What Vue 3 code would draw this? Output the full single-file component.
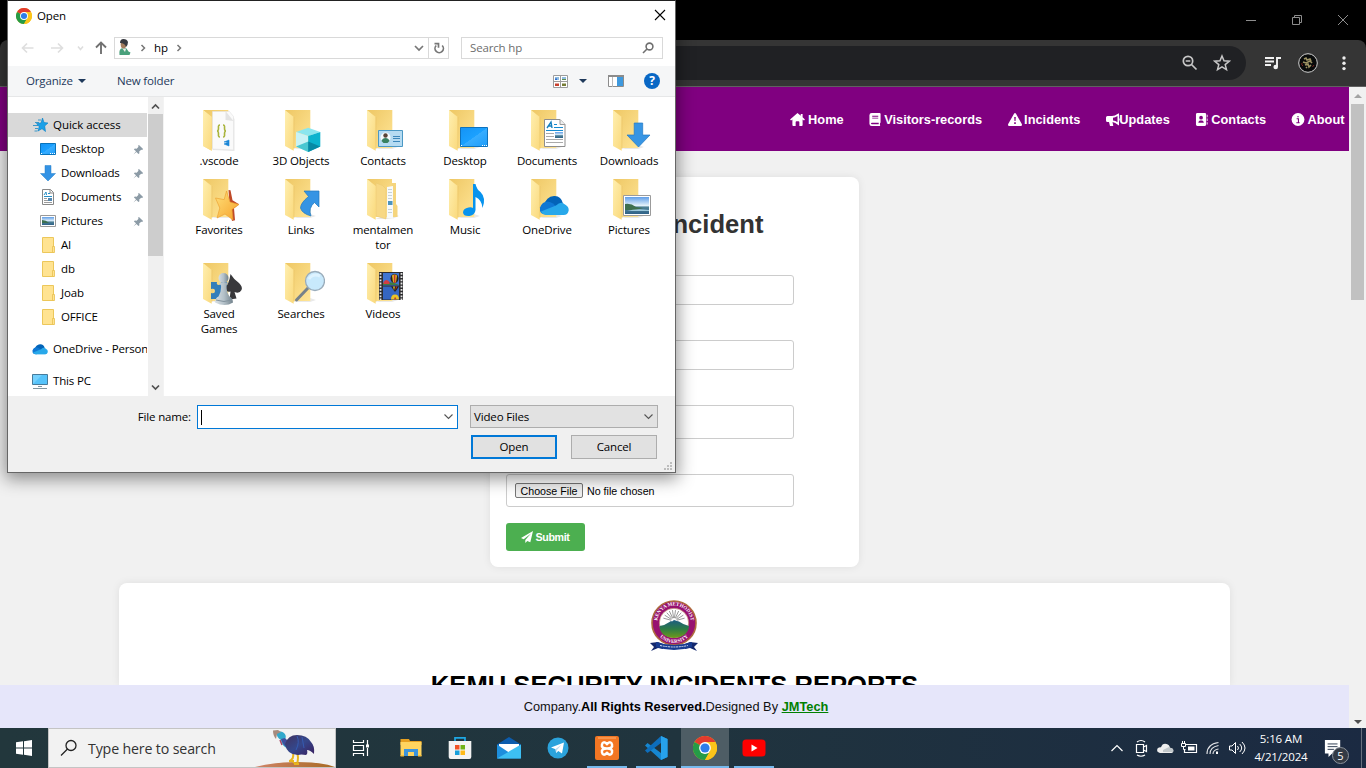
<script setup>
const places = [
  { label: 'Desktop', icon: 's-desktop', pin: true },
  { label: 'Downloads', icon: 's-down', pin: true },
  { label: 'Documents', icon: 's-doc', pin: true },
  { label: 'Pictures', icon: 's-pic', pin: true },
  { label: 'AI', icon: 's-folder' },
  { label: 'db', icon: 's-folder' },
  { label: 'Joab', icon: 's-folder' },
  { label: 'OFFICE', icon: 's-folder' },
]
const files = [
  ['.vscode', 'f-vscode'], ['3D Objects', 'f-3d'], ['Contacts', 'f-contacts'],
  ['Desktop', 'f-desktop'], ['Documents', 'f-docs'], ['Downloads', 'f-down'],
  ['Favorites', 'f-fav'], ['Links', 'f-links'], ['mentalmen\ntor', 'f-mental'],
  ['Music', 'f-music'], ['OneDrive', 'f-onedrive'], ['Pictures', 'f-pics'],
  ['Saved\nGames', 'f-games'], ['Searches', 'f-search'], ['Videos', 'f-videos'],
]
const nav = [
  { label: 'Home', icon: 'n-home', cls: 'w18' },
  { label: 'Visitors-records', icon: 'n-book', cls: 'w15' },
  { label: 'Incidents', icon: 'n-warn', cls: 'w17' },
  { label: 'Updates', icon: 'n-horn', cls: 'w14' },
  { label: 'Contacts', icon: 'n-card', cls: 'w16' },
  { label: 'About', icon: 'n-info', cls: 'w16' },
]
const apps = [
  { icon: 't-view' }, { icon: 't-explorer' }, { icon: 't-store' }, { icon: 't-mail' }, { icon: 't-telegram' },
  { icon: 't-xampp', open: true }, { icon: 't-code', open: true }, { icon: 'chrome', open: true, active: true }, { icon: 't-youtube', open: true },
]
const tray = ['y-chevron', 'y-meet', 'y-cloud', 'y-battery', 'y-wifi', 'y-volume']
const rays = [-75, -58, -41, -25, -8, 8, 25, 41, 58, 75]
</script>

<template>
  <div class="screen">
    <svg class="defs" width="0" height="0">
      <defs>
        <linearGradient id="gBack" x1="0" y1="0" x2="1" y2="1"><stop offset="0" stop-color="#eec764" /><stop offset="1" stop-color="#ffe596" /></linearGradient>
        <linearGradient id="gFront" x1="0" y1="0" x2="1" y2="1"><stop offset="0" stop-color="#ffefb0" /><stop offset="1" stop-color="#fad97c" /></linearGradient>
        <linearGradient id="gBlue" x1="0" y1="0" x2="1" y2="1"><stop offset="0" stop-color="#1493f5" /><stop offset=".5" stop-color="#1ba1ff" /><stop offset=".51" stop-color="#38adff" /><stop offset="1" stop-color="#1d9dfa" /></linearGradient>
        <linearGradient id="gPic" x1="0" y1="0" x2="0" y2="1"><stop offset="0" stop-color="#5f9ee8" /><stop offset=".5" stop-color="#e3f1fa" /><stop offset=".6" stop-color="#4f8196" /><stop offset="1" stop-color="#2f6288" /></linearGradient>
        <linearGradient id="gStar" x1="0" y1="0" x2="1" y2="1"><stop offset="0" stop-color="#ffe07a" /><stop offset="1" stop-color="#f6a22a" /></linearGradient>
        <linearGradient id="gHill" x1="0" y1="0" x2="0" y2="1"><stop offset="0" stop-color="#1c5c83" /><stop offset=".5" stop-color="#2c7b45" /><stop offset="1" stop-color="#6f9a19" /></linearGradient>
        <linearGradient id="gPawn" x1="0" y1="0" x2="1" y2="0"><stop offset="0" stop-color="#d7dfe5" /><stop offset=".5" stop-color="#b3c0c8" /><stop offset="1" stop-color="#71818b" /></linearGradient>
        <linearGradient id="gBird" x1="0" y1="0" x2="1" y2="1"><stop offset="0" stop-color="#40315f" /><stop offset=".5" stop-color="#34478b" /><stop offset="1" stop-color="#3a205f" /></linearGradient>
        <linearGradient id="gSand" x1="0" y1="0" x2="1" y2="0"><stop offset="0" stop-color="#cf8468" /><stop offset="1" stop-color="#a86a22" /></linearGradient>
      </defs>
      <symbol id="chrome" viewBox="0 0 24 24">
        <circle cx="12" cy="12" r="12" fill="#fbc116" />
        <path d="M12 12 1.6 6A12 12 0 0 1 22.4 6Z" fill="#e33b2e" />
        <path d="M12 12 1.6 6A12 12 0 0 0 12 24l5-9Z" fill="#259b47" />
        <path d="M12 6h10.4A12 12 0 0 1 12 24l5.2-9Z" fill="#fcc419" />
        <circle cx="12" cy="12" r="5.9" fill="#fff" /><circle cx="12" cy="12" r="4.6" fill="#2f7de9" />
      </symbol>
      <symbol id="folder" viewBox="0 0 48 48">
        <path d="M16 44h17l6-2-6-2Z" fill="#e9e9e9" />
        <path d="M8 5H33.300V43H16Z" fill="url(#gBack)" /><path d="M8 5 16.700 12V45.700L8 41Z" fill="url(#gFront)" />
        <path d="M16.900 12v32" stroke="#e6c163" stroke-width=".5" />
      </symbol>
      <symbol id="photo" viewBox="0 0 28 21">
        <path d="M.5.5h27v20H.5Z" fill="#fff" stroke="#9b9b9b" /><path d="M2 2h24v17H2Z" fill="url(#gPic)" />
        <path d="M2 9q6-1 11 3l7 1-7 2H2Z" fill="#3d6f4e" /><path d="M4 16q9-3 22-1v1Z" fill="#9cc8dc" />
      </symbol>
      <symbol id="cloud" viewBox="0 0 30 20">
        <path d="M5 10Q7 1 15 .5 22 0 24 8l-9 5Z" fill="#0364b8" /><path d="M1 12q2-6 8-6 5 1 8 5l-8 8H7Q0 19 1 12Z" fill="#0f78d4" />
        <path d="M17 10q5-5 9-1 4 2 3.700 6-1 4.500-5 4.500H7Q3 19 2 16Z" fill="#28a8ea" />
      </symbol>
      <symbol id="f-vscode" viewBox="0 0 48 48">
        <use href="#folder" /><path d="M18 9h18l3.500 5v32l-22-1Z" fill="#e8e8e8" /><path d="M17.500 6.500h17l4 5V45l-21-1Z" fill="#fafafa" stroke="#e2e2e2" stroke-width=".6" />
        <path d="m30.500 6 8 10-8-1Z" fill="#e3e3e3" />
        <path d="M25 20q-2 0-1.500 3 0 3-1.500 3 1.500 0 1.500 3-.5 3 1.500 3M28 20q2 0 1.500 3 0 3 1.500 3-1.500 0-1.500 3 .5 3-1.500 3" fill="none" stroke="#a9b43c" stroke-width="1.600" />
        <path d="m29 37 5-2v6l-5-2 4-2Z" fill="#1b86d6" stroke="#1b86d6" stroke-width=".6" /><path d="M8 5 16.700 12V45.700L8 41Z" fill="url(#gFront)" />
      </symbol>
      <symbol id="f-3d" viewBox="0 0 48 48">
        <use href="#folder" /><path d="m31.200 22.700 12.100 4.300L31.200 31 19 27Z" fill="#8be6ee" /><path d="m19 27 12.200 4v16L19 41.500Z" fill="#c8f2f5" />
        <path d="M43.300 27 31.200 31v16l12.100-5.500Z" fill="#0cb3ce" /><path d="m19 41.500 12.200-5v10.500Z" fill="#49c7d1" /><path d="m31.200 36.500 12.100 5L31.200 47Z" fill="#078aa5" />
      </symbol>
      <symbol id="f-contacts" viewBox="0 0 48 48">
        <use href="#folder" /><path d="M19.500 25.500h24v16h-24Z" fill="#b5dbf2" stroke="#4b98c4" /><circle cx="26.500" cy="32.500" r="5" fill="#f5fafc" />
        <circle cx="26.500" cy="30.500" r="2.200" fill="#594437" /><path d="M22.500 36q1-3 4-3t4 3l-2 2h-4Z" fill="#378161" /><path d="M34 31.500h7M34 33.500h7M34 36.500h7" stroke="#3c87bb" />
      </symbol>
      <symbol id="f-desktop" viewBox="0 0 48 48"><use href="#folder" /><path d="M19.500 22.500h27v19h-27Z" fill="url(#gBlue)" stroke="#0e72bd" /><path d="M20 40.500h1M41 40.500h1M43 40.500h1M45 40.500h1" stroke="#fff" /></symbol>
      <symbol id="f-docs" viewBox="0 0 48 48">
        <use href="#folder" /><path d="M21.500 14.500H37l5 5v22H21.500Z" fill="#fff" stroke="#8d8d8d" /><path d="M37 14.500v5h5" fill="#eee" stroke="#9a9a9a" />
        <path d="m24 23 4-6 1 6m-4-2h4" fill="none" stroke="#1680bf" stroke-width="1.400" /><path d="M31 19.500h3M31 22.500h9M23 25.500h17" stroke="#168bd0" />
        <path d="M23 28.500h8M23 31.500h8M23 34.500h17M23 37.500h17" stroke="#aaa" /><path d="M32 27h8v6h-8Z" fill="url(#gPic)" />
      </symbol>
      <symbol id="f-down" viewBox="0 0 48 48"><use href="#folder" /><path d="M29.200 18h8.500v12H45L33.500 42 22 30h7.200Z" fill="#3795e4" stroke="#2279c3" stroke-width=".7" /></symbol>
      <symbol id="f-fav" viewBox="0 0 48 48">
        <use href="#folder" /><path d="m33.500 16 2 .3 2 10 6.500 4-5 4 1 12-3 .7-2-10Z" fill="#bf4928" />
        <path d="m31.500 17 3.500 11 9 2.500-7 5 1 10.500-8-6-8 4 2.800-10L20.500 24l8.700 1.600Z" fill="url(#gStar)" stroke="#e99a2a" stroke-width=".6" />
      </symbol>
      <symbol id="f-links" viewBox="0 0 48 48"><use href="#folder" /><path d="M27 17h15v16l-4.500-4.500Q31 34 34 42 25 39.500 23.500 34q0-5 8-11.500Z" fill="#3594e4" stroke="#2378bd" stroke-width=".7" /></symbol>
      <symbol id="f-mental" viewBox="0 0 48 48">
        <path d="M16 45h17l7-3-6-3Z" fill="#e9e9e9" />
        <path d="M8 5H33v38H16Z" fill="url(#gBack)" /><path d="M33 9h4v21l1.500 2v11H33Z" fill="#f5d57e" />
        <path d="m28 13 6-1v33l-6-1Z" fill="#f7fafb" /><path d="M29 15.500h4M29 18.500h4M29 21.500h4M29 24.500h4M29 35.500h4M29 38.500h4" stroke="#c6d2d8" /><path d="M29 27h4.500v4H29Z" fill="#4d94be" />
        <path d="M17 9q8 2 10 6v30l-10-3Z" fill="#f7d885" stroke="#e9c66d" stroke-width=".5" /><path d="M8 5 16.700 12V45.700L8 41Z" fill="url(#gFront)" />
      </symbol>
      <symbol id="f-music" viewBox="0 0 48 48"><use href="#folder" /><path d="M32 10h2.500q1 5 5 8 6 6 2 16-.5-8-7-11v13q-.5 5-6 6-6 .5-6.500-3.500 0-4 5.500-5 3-.5 4.500.5Z" fill="#0793ee" /></symbol>
      <symbol id="f-onedrive" viewBox="0 0 48 48"><use href="#folder" /><use href="#cloud" x="16" y="21.500" width="30" height="20" /></symbol>
      <symbol id="f-pics" viewBox="0 0 48 48"><use href="#folder" /><use href="#photo" x="18" y="21" width="28" height="21" /></symbol>
      <symbol id="f-games" viewBox="0 0 48 48">
        <use href="#folder" /><path d="M16 24h6q-1 3 2 3 3-1 2-3h6v17H16v-6q4 1 4-2t-4-2Z" fill="#347eba" />
        <path d="M35.500 16q3 5 8.500 9 4 4 2.500 7-2 4-7 2l2 6.500-7 1 1-8q-4 1-4.500-2-.5-3 2-6 2-5 2.500-9.500Z" fill="#38383b" />
        <circle cx="28.500" cy="20" r="5" fill="url(#gPawn)" /><path d="M23.500 24.500h10l-2 3q0 7 3 11 3 1 3.500 6-8 5-18 0 .5-5 3.500-6 3-5 2.500-11Z" fill="url(#gPawn)" /><path d="M21 42q8 3 16 0" stroke="#83939e" fill="none" />
      </symbol>
      <symbol id="f-search" viewBox="0 0 48 48"><use href="#folder" /><path d="m31 30-11.500 12" stroke="#77828a" stroke-width="3" stroke-linecap="round" /><circle cx="38" cy="23" r="9.500" fill="#c8e9fc" stroke="#9aacba" stroke-width="1.300" /><path d="M32 21q4-6 11-3" fill="none" stroke="#def3ff" stroke-width="3" /></symbol>
      <symbol id="f-videos" viewBox="0 0 48 48">
        <use href="#folder" /><path d="M20 14h24v28H20Z" fill="#2d2d2f" /><path d="M21.500 15v27M42.500 15v27" stroke="#e5e5e5" stroke-width="1.800" stroke-dasharray="1.800 1.400" /><path d="M24 15h16v12.500H24Z" fill="#3f74d0" /><path d="M24 28.500h16v13H24Z" fill="#3566c2" />
        <path d="M24 25q7-3 16 2H24Z" fill="#3d7d43" /><ellipse cx="35.500" cy="20.500" rx="4" ry="4.500" fill="#24201e" /><path d="M33 17.500q2.500-2 5 0l-1 7h-3Z" fill="#e3b526" /><path d="M34.900 17h1.500v8h-1.500Z" fill="#c6342c" /><path d="M24.500 24q3-4 6 0v2h-6Z" fill="#d33f42" />
        <path d="M32 28.500h8l-3.500 5h-1Z" fill="#24201e" /><path d="m34 28.500 1 4 1-4Z" fill="#e3b526" /><path d="m37 28.500-.6 4 1.800-4Z" fill="#c6342c" /><path d="M32 41.500q0-5 4-5t4 5Z" fill="#ebc326" /><path d="M35 41.500q1-5 2.500 0Z" fill="#be412b" />
      </symbol>

      <symbol id="s-star" viewBox="0 0 16 16"><path d="M2 5.500h4M0 8.500h5M2 11.500h3M1.500 14h3M5 3h3" stroke="#3c99ca" /><path d="M9.500 1 11 5.500l4 .5-3.300 3 .8 5.500-3.500-2.800L5 14l1.200-4.300L3.500 6.500 8 6Z" fill="#1ba0e7" stroke="#0780c6" stroke-width=".6" /></symbol>
      <symbol id="s-desktop" viewBox="0 0 16 16"><path d="M.5 2.500h15v11H.5Z" fill="url(#gBlue)" stroke="#0873bb" /><path d="M1 12.500h1M10 12.500h1M12 12.500h1M14 12.500h1" stroke="#fff" /></symbol>
      <symbol id="s-down" viewBox="0 0 16 16"><path d="M5 .5h6v8h4.500L8 16 .5 8.500H5Z" fill="#3393e5" stroke="#267ec7" stroke-width=".5" /></symbol>
      <symbol id="s-doc" viewBox="0 0 16 16"><path d="M2.500.5h8l3 3v12h-11Z" fill="#fff" stroke="#888" /><path d="M10 .5V4h3.500" fill="none" stroke="#888" /><path d="m4 6 2-3 .5 3M8 4.500h2M4 7.500h8" stroke="#288fc5" fill="none" /><path d="M4 9.500h3M4 11.500h8M4 13.500h8" stroke="#9b9b9b" /><path d="M8 9h4v3H8Z" fill="#5386b0" /></symbol>
      <symbol id="s-pic" viewBox="0 0 16 16"><path d="M.5 2.500h15v11H.5Z" fill="#fff" stroke="#999" /><path d="M2 4h12v8H2Z" fill="url(#gPic)" /><path d="M2 7q4 0 7 3H2Z" fill="#3c7050" /></symbol>
      <symbol id="s-folder" viewBox="0 0 16 16"><path d="M2.500.500h11v15h-11Z" fill="#ffe391" stroke="#ecc75a" /><path d="M12.500 9.500h2v6h-2Z" fill="#ffe391" stroke="#e8c04e" stroke-width=".8" /></symbol>
      <symbol id="s-cloud" viewBox="0 0 16 16"><use href="#cloud" x="0" y="3" width="16" height="10.700" /></symbol>
      <symbol id="s-pin" viewBox="0 0 12 12"><path d="m6.500 1 4.500 4.500-1 1-1-.3-2.200 2L7 10 6 11 3.700 8.700.5 11.500 3.300 8 1 6l1-1 2 .2 2-2.200-.5-1Z" fill="#8c9ba6" /></symbol>
      <symbol id="s-pc" viewBox="0 0 16 16"><path d="M.5 1.500h15v10H.5Z" fill="#56c3fa" stroke="#477b9b" /><path d="M1 11V2h9Z" fill="#8bdbff" opacity=".6" /><path d="M1 15.500h14M6 13.500h4" stroke="#8296a0" /></symbol>

      <symbol id="n-home" viewBox="0 0 16 14"><path d="M8 0 0 7l1 1 1.500-1v6q0 1 1 1H6v-4q0-1 1-1h2q1 0 1 1v4h2.500q1 0 1-1V7L15 8l1-1-2.500-2.300V1h-2v2Z" fill="#fff" /></symbol>
      <symbol id="n-book" viewBox="0 0 12 14"><path fill-rule="evenodd" d="M2.500 0H11q1 0 1 1v9q0 .7-.6 1-.3 1 0 2 .6 1-.4 1H2.500Q0 14 0 11.500v-9Q0 0 2.500 0ZM3 3v1h6.500V3Zm0 2v1h6.500V5Zm-.3 5.500q-1 0-1 .8t1 .8H10v-1.600Z" fill="#fff" /></symbol>
      <symbol id="n-warn" viewBox="0 0 14 13"><path fill-rule="evenodd" d="M6 .7q1-1.400 2 0L13.800 11q.7 2-1 2H1.200q-1.700 0-1-2ZM6.200 4l.3 4h1l.3-4ZM6.200 9.300v1.600h1.600V9.300Z" fill="#fff" /></symbol>
      <symbol id="n-horn" viewBox="0 0 14 13"><path fill-rule="evenodd" d="M13 .2v12.300l-1.500-1Q9.500 9.500 6.500 9l.8 4H4L3 9H1.500Q0 9 0 7.500v-3Q0 3 1.500 3H6q3 0 5.500-2Zm-1.500 2.700Q9 4.700 7 4.700v2.700q2.500 0 4.500 1.800ZM13.200 5q1.300 1.500 0 3Z" fill="#fff" /></symbol>
      <symbol id="n-card" viewBox="0 0 13 14"><path fill-rule="evenodd" d="M1.500 0h8Q11 0 11 1.500v11Q11 14 9.500 14h-8Q0 14 0 12.500v-11Q0 0 1.500 0ZM5.500 3a2 2 0 1 0 0 4 2 2 0 0 0 0-4ZM2.500 10.500h6Q8 8 6.500 8h-2Q3 8 2.500 10.500ZM11.700 2h.8v2.500h-.8Zm0 4h.8v2.500h-.8Zm0 4h.8v2.500h-.8Z" fill="#fff" /></symbol>
      <symbol id="n-info" viewBox="0 0 14 14"><circle cx="7" cy="7" r="6.900" fill="#fff" /><path d="M5.500 6.200h2v4.300M5.200 10.500h3.600M6.200 4h1.600" fill="none" stroke="#800080" stroke-width="1.200" /></symbol>

      <symbol id="t-view" viewBox="0 0 24 24"><path d="M4.500 4v2.500h10V4M4.500 20v-2.500h10V20M4.500 9.500h10v5h-10ZM18.500 4v5M18.500 12v8" fill="none" stroke="#fff" stroke-width="1.200" /><path d="M17 8.500h3v3h-3Z" fill="#fff" /></symbol>
      <symbol id="t-explorer" viewBox="0 0 24 24"><path d="M1.500 3H10l1 2h11.500v4h-21Z" fill="#e7a020" /><path d="M1.500 6h21v14h-21Z" fill="#ffd45f" /><path d="M5 20v-7h14v7h-4v-4H9v4Z" fill="#3c94dc" /><path d="M1.500 19h3.500v1.500H1.500ZM19 19h3.500v1.500H19Z" fill="#f4bd3d" /></symbol>
      <symbol id="t-store" viewBox="0 0 24 24"><path d="M7 6V1.800h10V6" fill="none" stroke="#1ea8e5" stroke-width="1.700" /><path d="M.7 5h22.600v16q0 2-2 2H2.700q-2 0-2-2Z" fill="#f3f3f3" /><path d="M7 9h4.500v4.500H7Z" fill="#f15325" /><path d="M12.500 9H17v4.500h-4.500Z" fill="#70b218" /><path d="M7 14.500h4.500V19H7Z" fill="#179fdb" /><path d="M12.500 14.500H17V19h-4.500Z" fill="#ffba19" /></symbol>
      <symbol id="t-mail" viewBox="0 0 24 24"><path d="M0 8.500 12 1l12 7.500V22H0Z" fill="#0c5cad" /><path d="M2 8h20v7l-10 5L2 15Z" fill="#fff" /><path d="m0 8.500 12 8L24 22.500H0Z" fill="#1d8edc" /><path d="M24 8.500 0 22.500h24Z" fill="#3dbff3" /></symbol>
      <symbol id="t-telegram" viewBox="0 0 24 24"><circle cx="12" cy="12" r="10.500" fill="#2ba3dc" /><path d="m5 11.500 13-5-2 11-3.700-2.500-2.200 2-.5-3.800Z" fill="#fff" /><path d="m9.500 13 6-4.200-4.500 5.200-.9 3Z" fill="#bddcf0" /></symbol>
      <symbol id="t-xampp" viewBox="0 0 24 24"><rect x="0" y="0" width="24" height="24" rx="2" fill="#f37623" /><path d="M3 2h18" stroke="#ffb173" /><path d="M12 12.500q-6 0-5-4 1-4 5-.5 4-3.500 5 .5 1 4-5 4Zm0 0q-6 0-5 4 1 4 5 .5 4 3.500 5-.5 1-4-5-4Z" fill="none" stroke="#fff" stroke-width="2.500" /></symbol>
      <symbol id="t-code" viewBox="0 0 24 24"><path d="m17 0 6.500 3v18L17 24 1 9.500 3.500 7 17 17Z" fill="#1687d1" /><path d="M17 0v7L3.500 17 1 14.500Z" fill="#0d6ebc" /><path d="m17 0 6.500 3v18L17 24Z" fill="#27a2eb" /></symbol>
      <symbol id="t-youtube" viewBox="0 0 24 24"><rect x=".5" y="3.500" width="23" height="17" rx="3.500" fill="#f00" /><path d="m9.500 8.500 6 3.500-6 3.500Z" fill="#fff" /></symbol>

      <symbol id="y-chevron" viewBox="0 0 18 18"><path d="m3.500 12 5.500-5.500 5.500 5.500" fill="none" stroke="#fff" stroke-width="1.200" /></symbol>
      <symbol id="y-meet" viewBox="0 0 18 18"><path d="M4.500 5.500h7v8h-7ZM11.500 8l3-1.500v6l-3-1.500M5 3q4-3 8 0M5 16q4 2.500 8 0" fill="none" stroke="#fff" stroke-width="1.200" /></symbol>
      <symbol id="y-cloud" viewBox="0 0 18 18"><path d="M4 14Q0 13 1.500 9.500 3 8 5 8.200 6.500 4 10.500 5q3 .5 3.500 4 3.500 0 3.500 3-.5 2-2 2Z" fill="#eee" /><path d="m7 11 6-3 4 2v3H7Z" fill="#c1c7ca" /></symbol>
      <symbol id="y-battery" viewBox="0 0 18 18"><path d="M6 5.500h10.500v8H4.500V10" fill="none" stroke="#fff" stroke-width="1.200" /><path d="M8 7.500h6.500v4H8Z" fill="#fff" /><path d="M1.500 4.500h4v3h-4ZM2.500 4V2M4.500 4V2M3.500 8v2.500h2" stroke="#fff" fill="none" /></symbol>
      <symbol id="y-wifi" viewBox="0 0 18 18"><path d="M3 15Q3 5 14.500 3.500M6 15q0-7 8.500-8.500M9 15q0-4 5.500-5" fill="none" stroke="#e3e5e8" stroke-width="1.100" /><path d="M12 12.500h2V15h-2Z" fill="#fff" /></symbol>
      <symbol id="y-volume" viewBox="0 0 18 18"><path d="M1.500 7H4l3.500-3.500v11L4 11H1.500ZM9.500 7q2 2 0 4M11.700 5q4 4 0 8M14 3q6 6 0 12" fill="none" stroke="#fff" /></symbol>
    </svg>

    <div class="titlebar">
      <svg width="110" height="20" viewBox="0 0 110 20" fill="none" stroke="#8d8d8d"><path d="M0 10.500h10M46.500 7.500h7v7h-7ZM48.500 7.500v-2h7v7h-2M92 5l10 10M102 5 92 15" /></svg>
    </div>
    <div class="toolbar">
      <div class="omnibox">
        <svg width="18" height="18" viewBox="0 0 18 18" fill="none" stroke="#c7c7c7" stroke-width="1.700"><circle cx="7" cy="7" r="4.700" /><path d="m10.500 10.500 5 5M4.700 7h4.600" /></svg>
        <svg width="18" height="18" viewBox="0 0 18 18" fill="none" stroke="#c7c7c7" stroke-width="1.500"><path d="m9 2 2 4.800 5.200.4-4 3.400 1.300 5L9 12.900l-4.500 2.700 1.300-5-4-3.400 5.200-.4Z" /></svg>
      </div>
      <svg class="queue" width="18" height="18" viewBox="0 0 18 18"><path d="M1 4h9M1 7.500h9M1 11h6M13 13V4h4" fill="none" stroke="#f2f2f2" stroke-width="1.900" /><circle cx="11.700" cy="13" r="2.300" fill="#f2f2f2" /></svg>
      <svg class="avatar" width="20" height="20" viewBox="0 0 20 20"><circle cx="10" cy="10" r="9.300" fill="#090b0b" stroke="#d1d1d1" /><path d="m6 6 2-1 1 2 3-1 1 2M5 9l3 1 4-2 2 2M7 12l3-1 1 3 2-2M8 14l1 1" fill="none" stroke="#9c9263" stroke-width="1.600" /><path d="M5 13q-2-1-1-3M14.500 14l1.500-2" fill="none" stroke="#7b2520" /></svg>
      <svg width="6" height="18" viewBox="0 0 6 18" fill="#eee"><circle cx="3" cy="4" r="1.700" /><circle cx="3" cy="9.300" r="1.700" /><circle cx="3" cy="14.600" r="1.700" /></svg>
    </div>

    <div class="viewport">
      <main class="page">
        <nav class="navbar">
          <a v-for="n in nav" :key="n.label"><span :class="['nicon', n.cls]"><svg width="14" height="13"><use :href="'#' + n.icon" /></svg></span>{{ n.label }}</a>
        </nav>
        <section class="form-card">
          <h2>Incident</h2>
          <div class="field f1"></div>
          <div class="field f2"></div>
          <div class="field f3"></div>
          <div class="field f4"><span class="choose">Choose File</span><span>No file chosen</span></div>
          <button class="submit"><svg width="12" height="12" viewBox="0 0 12 12"><path d="M12 0 0 7l2.700 1.200L10 2.500 4.300 9v3l2-2 3 1.200Z" fill="#fff" /></svg>Submit</button>
        </section>
        <section class="report-card">
          <svg class="crest" width="54" height="54" viewBox="0 0 54 54">
            <circle cx="27" cy="24" r="22" fill="#971270" stroke="#af6b3d" stroke-width="1.600" />
            <circle cx="27" cy="24" r="14.700" fill="#fff" stroke="#b57354" stroke-width=".6" />
            <g stroke="#555" stroke-width=".55"><path v-for="r in rays" :key="r" d="M27 19V11" :transform="`rotate(${r} 27 22)`" /></g>
            <path d="M12.500 27q6-1 10-4l1.500-1 1 .5 2-1.500 3 1 2 .5q4 3 10 4.500-1 11-15 12-14-1-14.500-12Z" fill="url(#gHill)" />
            <path id="crestTop" d="M11.200 29A16.800 16.800 0 1 1 42.800 29" fill="none" /><path id="crestLow" d="M7.500 28A19.900 19.900 0 0 0 46.500 28" fill="none" />
            <text class="crest-text"><textPath href="#crestTop" startOffset="50%" text-anchor="middle">KENYA METHODIST</textPath></text>
            <text class="crest-text"><textPath href="#crestLow" startOffset="50%" text-anchor="middle">UNIVERSITY</textPath></text>
            <path d="m3 44 8-1 5 2v5l-5-1-7 3 3-4ZM51 44l-8-1-5 2v5l5-1 7 3-3-4Z" fill="#14296f" /><path d="M9 43q18 6 36 0v5q-18 6-36 0Z" fill="#173b91" /><path d="M13 46.500q14 3 28 0" fill="none" stroke="#d9dff0" stroke-dasharray="2 .7" />
          </svg>
          <h1>KEMU SECURITY INCIDENTS REPORTS</h1>
        </section>
        <footer class="footer">Company.<b>All Rights Reserved.</b>Designed By&nbsp;<a>JMTech</a></footer>
      </main>
      <div class="page-scroll"><i class="up"></i><span></span><i class="down"></i></div>
    </div>

    <div class="taskbar">
      <div class="start"><svg width="16" height="16" viewBox="0 0 16 16" fill="#fff"><path d="m0 2.300 7-1v6.200H0ZM8 1.200 16 0v7.500H8ZM0 8.500h7v6.200l-7-1ZM8 8.500h8V16l-8-1.200Z" /></svg></div>
      <div class="search-box">
        <svg width="18" height="18" viewBox="0 0 18 18" fill="none" stroke="#222" stroke-width="1.300"><circle cx="11" cy="6.500" r="5" /><path d="m7.500 10-6.500 6.500" /></svg>
        <span>Type here to search</span>
        <svg class="bird" width="80" height="38" viewBox="0 0 80 38">
          <path d="M0 38q20-5 42-5 25 0 38 5Z" fill="url(#gSand)" />
          <path d="M38 25q1 4-2 6l5 4m1-11q2 4 0 11m-8-3h5m0 3h5" stroke="#e8b51c" stroke-width="2" fill="none" />
          <path d="M22 4q4-3 7 0 3 3 1 6 0 3 6 4l-3 6q-7-4-7-9-5-3-4-7Z" fill="#31a8cb" /><path d="m18 1.500 5-.5 3 2-4 2-1 5q-3-3-3-8.500Z" fill="#a68b7d" /><path d="m26 10 4-1 5 5-1 6q-6-3-8-10Z" fill="#3f4f9e" /><path d="m25 11 2 5" stroke="#a94466" fill="none" stroke-width="1.500" />
          <path d="M30 15q3-9 12-9 10 0 14 7 4 4 3 12-4-4-7-4 1 4-1 5-5-1-8 0-11 0-13-11Z" fill="url(#gBird)" /><path d="M42 7q3 6-1 14M47 8l2 11" stroke="#365bb1" fill="none" />
        </svg>
      </div>
      <div class="apps">
        <div v-for="a in apps" :key="a.icon" :class="['app', { open: a.open, active: a.active }]"><svg width="24" height="24"><use :href="'#' + a.icon" /></svg></div>
      </div>
      <div class="tray">
        <svg v-for="t in tray" :key="t" width="18" height="18"><use :href="'#' + t" /></svg>
      </div>
      <div class="clock"><span>5:16 AM</span><span>4/21/2024</span></div>
      <div class="notice"><svg width="18" height="18" viewBox="0 0 20 20"><path d="M1 1h17v15H9l-4 4v-4H1Z" fill="#fff" /><path d="M4 5.500h11M4 8.500h11M4 11.500h7" stroke="#1d2d43" /></svg><span class="badge">5</span></div>
      <div class="peek"></div>
    </div>

    <div class="dialog">
      <div class="d-title"><svg width="16" height="16"><use href="#chrome" /></svg><span>Open</span>
        <svg class="close" width="12" height="12" viewBox="0 0 12 12"><path d="m1 1 10 10M11 1 1 11" stroke="#000" stroke-width="1.100" /></svg>
      </div>
      <div class="d-address">
        <svg width="96" height="22" viewBox="0 0 96 22" fill="none" stroke="#dedede" stroke-width="1.600"><path d="M4 11h11.500M9 6.500 4.500 11 9 15.500M33 11h11.500M40 6.500l4.500 4.500-4.500 4.500M60 9.500l2.500 3 2.500-3" /><path d="M83 17V6M78 10.500l5-5 5 5" stroke="#717171" stroke-width="1.900" /></svg>
        <div class="path">
          <svg class="user" width="16" height="18" viewBox="0 0 16 18"><path d="M2.500 17q-1-6 3-7l4 .5 2 3 2 1-1 2.500Z" fill="#4aa17c" /><path d="m5 10 3 4 1-3Z" fill="#eee" /><ellipse cx="6.500" cy="6.500" rx="2.800" ry="4" fill="#a47d5e" /><path d="M3 5Q3 1 6.500 1t4.500 3q0 3-2 5-1-4-6-4Z" fill="#383a40" /></svg>
          <svg class="sep" width="6" height="8" viewBox="0 0 6 8" fill="none" stroke="#777" stroke-width="1.500"><path d="m1.500 1 3 3-3 3" /></svg><span>hp</span><svg class="sep" width="6" height="8" viewBox="0 0 6 8" fill="none" stroke="#777" stroke-width="1.500"><path d="m1.500 1 3 3-3 3" /></svg>
          <svg class="drop" width="10" height="8" viewBox="0 0 10 8" fill="none" stroke="#777" stroke-width="1.700"><path d="m1 2 4 4 4-4" /></svg>
        </div>
        <div class="refresh"><svg width="12" height="12" viewBox="0 0 12 12" fill="none" stroke="#777" stroke-width="1.700"><path d="M9.200 3.500a4.200 4.200 0 1 1-6 0M1.500 1.700h4v4" /></svg></div>
        <div class="d-search"><span>Search hp</span><svg width="12" height="12" viewBox="0 0 12 12" fill="none" stroke="#707070" stroke-width="1.600"><circle cx="7.500" cy="4.500" r="3.400" /><path d="M5 7 1 11" /></svg></div>
      </div>
      <div class="d-tools">
        <span>Organize</span><i class="caret"></i><span class="newf">New folder</span>
        <svg class="tv" width="15" height="13" viewBox="0 0 15 13"><path d="M.5.500h14v12H.5ZM7.500 0v13M0 6.500h15" fill="#fff" stroke="#9c9c9c" /><path d="M2 2h4v3H2ZM9 2h4v3H9Z" fill="#8fbce0" /><path d="M2 3.500h2v1.500H2Z" fill="#2a6bd0" /><path d="M9 4h4v1H9Z" fill="#5d8f50" /><path d="M2 8.500h4v2.500H2Z" fill="#c8402e" /><path d="M9 8.500h4v2.500H9Z" fill="#767c35" /></svg><i class="caret"></i>
        <svg class="tp" width="16" height="12" viewBox="0 0 16 12"><path d="M.5.500h15v11H.5Z" fill="#fff" stroke="#8c8c8c" /><path d="M0 1h16" stroke="#8c8c8c" stroke-width="2" /><path d="M4.500 2v10" stroke="#bbb" /><path d="M9 2h6v9H9Z" fill="#3e99de" /></svg>
        <span class="help">?</span>
      </div>
      <div class="d-body">
        <div class="tree">
          <div class="row quick"><svg width="16" height="16"><use href="#s-star" /></svg><span>Quick access</span></div>
          <div v-for="p in places" :key="p.label" class="row sub"><svg width="16" height="16"><use :href="'#' + p.icon" /></svg><span>{{ p.label }}</span><svg v-if="p.pin" class="pin" width="11" height="11"><use href="#s-pin" /></svg></div>
          <div class="row root"><svg width="16" height="16"><use href="#s-cloud" /></svg><span>OneDrive - Person</span></div>
          <div class="row root"><svg width="16" height="16"><use href="#s-pc" /></svg><span>This PC</span></div>
        </div>
        <div class="tree-scroll"><svg width="9" height="7" viewBox="0 0 9 7"><path d="m1 5.500 3.500-3.500 3.500 3.500" fill="none" stroke="#505050" stroke-width="1.700" /></svg><span></span><svg class="td" width="9" height="7" viewBox="0 0 9 7"><path d="m1 1.500 3.500 3.500 3.500-3.500" fill="none" stroke="#505050" stroke-width="1.700" /></svg></div>
        <div class="files">
          <div v-for="f in files" :key="f[0]" class="file"><svg width="48" height="48"><use :href="'#' + f[1]" /></svg><span>{{ f[0] }}</span></div>
        </div>
      </div>
      <div class="d-foot">
        <div class="line"><label>File name:</label><div class="fname"><i></i><svg width="9" height="6" viewBox="0 0 9 6"><path d="m.5.500 4 4 4-4" fill="none" stroke="#555" stroke-width="1.100" /></svg></div><div class="ftype"><span>Video Files</span><svg width="9" height="6" viewBox="0 0 9 6"><path d="m.5.500 4 4 4-4" fill="none" stroke="#555" stroke-width="1.100" /></svg></div></div>
        <div class="line actions"><button class="primary">Open</button><button>Cancel</button></div>
        <svg class="grip" width="8" height="8" viewBox="0 0 8 8" fill="#bdbdbd"><path d="M6 0h2v2H6ZM3 3h2v2H3ZM6 3h2v2H6ZM0 6h2v2H0ZM3 6h2v2H3ZM6 6h2v2H6Z" /></svg>
      </div>
    </div>
  </div>
</template>

<style>
html, body { margin: 0; overflow: hidden; background: #000; }
</style>

<style scoped>
* { box-sizing: border-box; }
svg { display: block; flex: none; }
.defs { position: absolute; }
.screen { position: relative; display: flex; flex-direction: column; width: 1366px; height: 768px; overflow: hidden; background: #000; font-family: "Liberation Sans", Arial, sans-serif; }
.titlebar { height: 40px; display: flex; justify-content: flex-end; align-items: center; padding-right: 10px; }
.toolbar { height: 47px; background: #353535; border-bottom: 1px solid #606060; border-radius: 8px 8px 0 0; display: flex; align-items: center; justify-content: flex-end; padding-right: 19px; }
.omnibox { width: 1190px; height: 34px; border-radius: 17px; background: #202124; display: flex; justify-content: flex-end; align-items: center; gap: 14px; padding-right: 15px; }
.queue { margin-left: 18px; }
.avatar { margin: 0 23px 0 16px; }
.viewport { height: 641px; display: flex; }
.page { width: 1349px; height: 641px; background: #f1f1f1; display: flex; flex-direction: column; align-items: center; overflow: hidden; }
.navbar { width: 100%; height: 64px; flex: none; background: #800080; display: flex; align-items: center; justify-content: flex-end; gap: 25.500px; padding-right: 4.500px; color: #fff; font-size: 12.800px; font-weight: bold; }
.navbar a { display: flex; align-items: center; white-space: nowrap; }
.nicon { display: flex; }
.w18 { width: 18px; } .w17 { width: 16.500px; } .w16 { width: 16px; } .w15 { width: 15px; } .w14 { width: 13.500px; }
.w15 svg { margin-left: -1px; } .w16 svg { margin-left: -.5px; } .w18 svg { width: 15px; }
.form-card { width: 369px; height: 390px; flex: none; margin-top: 26px; background: #fff; border-radius: 8px; padding: 0 16px; box-shadow: 0 0 8px rgba(0,0,0,.08); }
h2 { margin: 32px 0 0; padding-right: 79.500px; text-align: right; color: #333; font-size: 25.600px; line-height: 30px; }
.field { width: 288px; border: 1px solid #ccc; border-radius: 3px; background: #fff; }
.f1 { height: 30px; margin-top: 36px; }
.f2 { height: 30px; margin-top: 35px; }
.f3 { height: 34px; margin-top: 35px; }
.f4 { height: 33px; margin-top: 35px; padding-left: 8px; display: flex; align-items: center; gap: 4px; font-size: 10.670px; color: #000; }
.choose { width: 68px; height: 15px; border: 1px solid #767676; border-radius: 2px; background: #efefef; text-align: center; line-height: 14px; white-space: nowrap; }
.submit { margin-top: 16px; width: 79px; height: 28px; border: 0; border-radius: 3px; background: #4caf50; color: #fff; font: bold 10.670px "Liberation Sans", sans-serif; display: flex; align-items: center; justify-content: center; gap: 2px; padding: 0; letter-spacing: -.35px; }
.report-card { width: 1111px; height: 102px; flex: none; margin-top: 16px; background: #fff; border-radius: 8px 8px 0 0; display: flex; flex-direction: column; align-items: center; box-shadow: 0 0 8px rgba(0,0,0,.08); }
.crest { margin: 16px 1px 0 0; }
.crest-text { font: bold 5px "Liberation Serif", serif; fill: #fff; }
h1 { margin: 18px 0 0; font-size: 25.600px; line-height: 29px; color: #000; white-space: nowrap; }
.footer { width: 100%; height: 43px; flex: none; background: #e6e6fa; color: #111; display: flex; align-items: center; justify-content: center; font-size: 12.800px; padding-left: 3px; position: relative; }
.footer b { color: #000; }
.footer a { color: #008000; font-weight: bold; text-decoration: underline; }
.page-scroll { width: 17px; background: #f1f1f1; display: flex; flex-direction: column; align-items: center; padding: 7px 0 4px; }
.page-scroll span { width: 13px; height: 196px; background: #c1c1c1; margin-top: 6px; }
.up, .down { width: 0; height: 0; border: 4px solid transparent; }
.up { border-top: 0; border-bottom-color: #a3a3a3; }
.down { border-bottom: 0; border-top-color: #505050; margin-top: auto; }

.taskbar { height: 40px; background: linear-gradient(90deg, #22373c, #20343e 50%, #1b2a42); display: flex; align-items: stretch; font-family: "Open Sans", "Noto Sans", sans-serif; }
.start { width: 48px; display: flex; align-items: center; justify-content: center; }
.search-box { width: 288px; background: #f2f2f2; border: 1px solid #c4c4c4; display: flex; align-items: center; padding-left: 11px; color: #333; font-size: 14.200px; letter-spacing: -.15px; overflow: hidden; }
.search-box span { margin-left: 10px; white-space: nowrap; }
.bird { margin-left: auto; }
.apps { display: flex; margin-left: 1px; }
.app { width: 49px; display: flex; align-items: center; justify-content: center; position: relative; }
.app:first-child svg { margin-right: 2px; }
.app.active { width: 48px; margin-left: 1px; background: #4e5d65; }
.app.open::after { content: ""; position: absolute; left: 5px; right: 4px; bottom: 0; height: 2px; background: #76b9ed; }
.app.active::after { left: 0; right: 0; }
.tray { margin-left: auto; display: flex; align-items: center; gap: 6px; }
.clock { width: 70px; display: flex; flex-direction: column; align-items: center; color: #fff; font-size: 11.500px; line-height: 18px; padding-top: 2px; letter-spacing: -.15px; }
.notice { width: 45px; display: flex; align-items: center; padding-left: 8px; position: relative; }
.badge { position: absolute; left: 16px; top: 19px; width: 17px; height: 17px; border-radius: 50%; background: #343b45; border: 1px solid #8b929b; color: #fff; font-size: 11px; line-height: 15px; text-align: center; }
.peek { width: 5px; border-left: 1px solid #66707e; }

.dialog { position: absolute; left: 7px; top: 0; width: 669px; height: 473px; background: #fff; border: 1px solid #666; border-top-color: #222; box-shadow: 0 4px 16px 2px rgba(0,0,0,.42); font-family: "Open Sans", "Noto Sans", sans-serif; font-size: 11.500px; letter-spacing: -.15px; color: #000; display: flex; flex-direction: column; }
.d-title { height: 30px; display: flex; align-items: center; padding: 0 9px 0 8px; gap: 5px; }
.d-title span, .d-address span, .row span, .d-tools > span:not(.help) { padding-bottom: 2px; }
.d-title > svg:first-child { margin-bottom: 1px; }
.close { margin-left: auto; margin-bottom: 2px; }
.d-address { height: 35px; display: flex; align-items: center; padding: 0 12px 1px 10px; }
.path { width: 315px; height: 22px; border: 1px solid #d9d9d9; display: flex; align-items: center; padding-left: 2px; }
.path .user { margin-bottom: 2px; }
.path .sep { margin: 0 8px 0 7px; }
.path span + .sep { margin-left: 8px; }
.path .drop { margin-left: auto; margin-right: 4px; }
.refresh { width: 20px; height: 22px; border: 1px solid #d9d9d9; border-left: 0; display: flex; align-items: center; justify-content: center; }
.d-search { margin-left: auto; width: 202px; height: 22px; border: 1px solid #d9d9d9; display: flex; align-items: center; justify-content: space-between; padding: 0 8px; color: #6d6d6d; }
.d-tools { height: 31px; background: #f5f6f7; border-bottom: 1px solid #e6e7e8; display: flex; align-items: center; padding-left: 18px; color: #1e395b; padding-right: 15px; }
.caret { width: 0; height: 0; border: 4px solid transparent; border-top-color: #1e395b; border-bottom: 0; margin-left: 5px; }
.newf { margin-left: 31px; }
.tv { margin-left: auto; margin-right: 6px; }
.tp { margin-left: 21px; }
.help { width: 16px; height: 16px; margin-left: 20px; border-radius: 50%; background: #0867c5; color: #fff; font-weight: bold; font-size: 12px; line-height: 16px; text-align: center; }
.d-body { height: 299px; display: flex; }
.tree { width: 139px; margin-right: 1px; padding-top: 16px; overflow: hidden; }
.row { height: 24px; display: flex; align-items: center; white-space: nowrap; }
.quick { background: #d9d9d9; padding-left: 26px; }
.quick svg { margin-left: -1px; }
.quick span { margin-left: 4px; letter-spacing: -.05px; }
.sub { padding-left: 32px; }
.sub span { margin-left: 5px; }
.pin { margin-left: auto; margin-right: 3px; }
.root { margin-top: 8px; padding-left: 24px; }
.root span { margin-left: 5px; }
.tree-scroll { width: 15px; background: #f0f0f0; display: flex; flex-direction: column; align-items: center; padding: 6px 0 5px; }
.tree-scroll span { width: 15px; height: 142px; background: #cdcdcd; margin-top: 4px; }
.tree-scroll .td { margin-top: auto; }
.files { flex: 1; border-left: 1px solid #f3f3f3; padding: 8px 0 0 14px; display: grid; grid-template-columns: repeat(6, 82px); grid-template-rows: 69px 84px 84px; }
.file { display: flex; flex-direction: column; align-items: center; }
.file span { white-space: pre; text-align: center; line-height: 15px; }
.d-foot { height: 76px; background: #f0f0f0; padding-top: 9px; position: relative; }
.line { display: flex; align-items: flex-start; }
.line label { width: 183px; text-align: right; line-height: 23px; margin-right: 6px; white-space: nowrap; }
.fname { width: 261px; height: 24px; border: 1px solid #0078d7; background: #fff; display: flex; align-items: center; justify-content: space-between; padding: 0 4px 0 3px; }
.fname i { width: 1px; height: 15px; background: #000; }
.ftype { width: 188px; height: 23px; margin-left: 12px; background: #e2e2e2; border: 1px solid #adadad; display: flex; align-items: center; justify-content: space-between; padding: 0 4px 0 3px; }
.actions { margin-top: 6px; padding-left: 463px; gap: 14px; }
.actions button { width: 86px; height: 24px; border: 1px solid #adadad; background: #e1e1e1; font: inherit; letter-spacing: inherit; color: #000; padding: 0 0 2px; }
.actions .primary { border: 2px solid #0078d7; }
.grip { position: absolute; right: 3px; bottom: 2px; }
</style>
